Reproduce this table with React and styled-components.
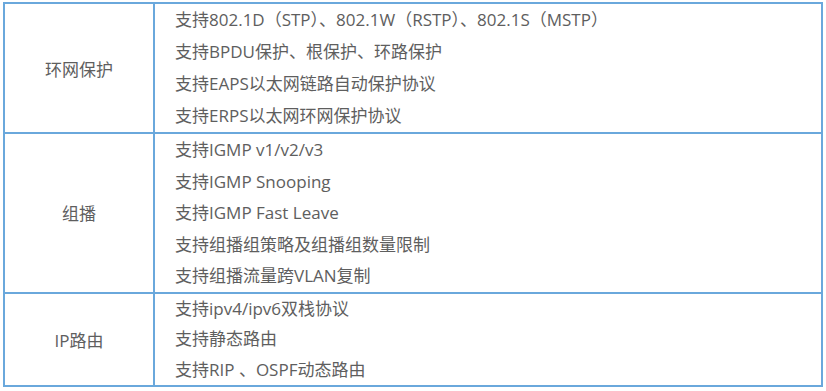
import React from "react";
import styled, { createGlobalStyle } from "styled-components";

const Global = createGlobalStyle`
  html, body { margin: 0; padding: 0; background: #ffffff; }
  body { font-family: "Open Sans", "Noto Sans CJK SC", sans-serif; }
`;

const Page = styled.div`
  padding: 2px 0 0 3px;
`;

const Table = styled.table`
  border-collapse: collapse;
  width: 820px;
  table-layout: fixed;
  color: #5e5e5e;
  font-size: 17px;
`;

const Row = styled.tr``;

const Cell = styled.td`
  border: 2px solid #6aa8dc;
  padding: 0;
  vertical-align: middle;
`;

const NameCell = styled(Cell)`
  width: 148px;
  text-align: center;
`;

const ItemCell = styled(Cell)`
  padding-left: 20px;
`;

const Item = styled.div`
  height: ${(p) => p.$lh}px;
  line-height: ${(p) => p.$lh}px;
  white-space: nowrap;
`;

const groups = [
  {
    name: "环网保护",
    lh: 32,
    items: [
      "支持802.1D（STP）、802.1W（RSTP）、802.1S（MSTP）",
      "支持BPDU保护、根保护、环路保护",
      "支持EAPS以太网链路自动保护协议",
      "支持ERPS以太网环网保护协议",
    ],
  },
  {
    name: "组播",
    lh: 31.6,
    items: [
      "支持IGMP v1/v2/v3",
      "支持IGMP Snooping",
      "支持IGMP Fast Leave",
      "支持组播组策略及组播组数量限制",
      "支持组播流量跨VLAN复制",
    ],
  },
  {
    name: "IP路由",
    lh: 30.5,
    items: ["支持ipv4/ipv6双栈协议", "支持静态路由", "支持RIP 、OSPF动态路由"],
  },
];

export default function App() {
  return (
    <>
      <Global />
      <Page>
        <Table>
          <tbody>
            {groups.map((g) => (
              <Row key={g.name}>
                <NameCell>{g.name}</NameCell>
                <ItemCell>
                  {g.items.map((t) => (
                    <Item key={t} $lh={g.lh}>
                      {t}
                    </Item>
                  ))}
                </ItemCell>
              </Row>
            ))}
          </tbody>
        </Table>
      </Page>
    </>
  );
}
